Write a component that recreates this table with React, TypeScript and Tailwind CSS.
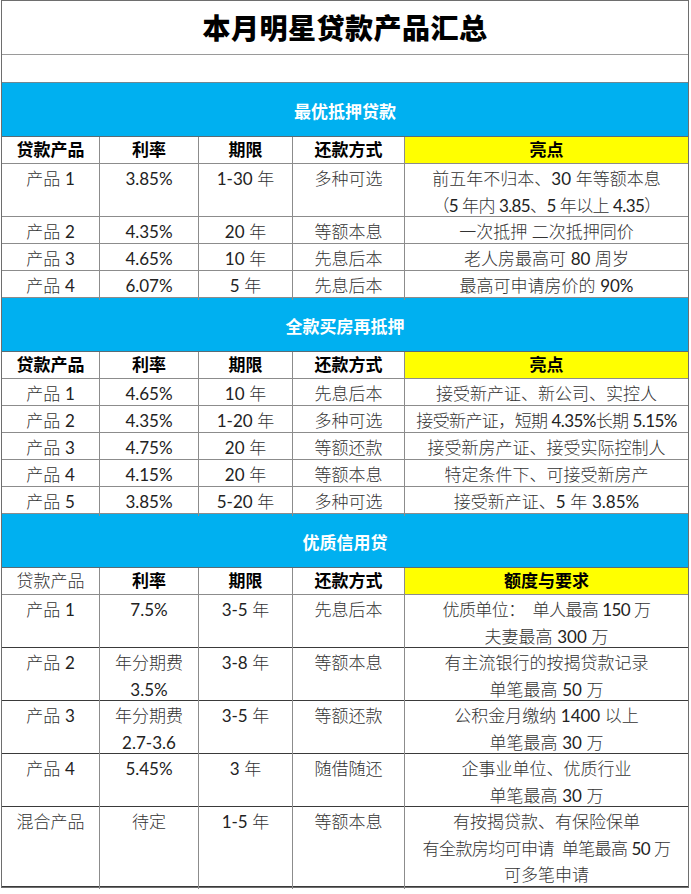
import React from 'react'

type Row = string[][]

interface Section {
  title: string
  lastHeader: string
  plainFirstHeader?: boolean
  rows: Row[]
}

const sections: Section[] = [
  {
    title: '最优抵押贷款',
    lastHeader: '亮点',
    rows: [
      [['产品 1'], ['3.85%'], ['1-30 年'], ['多种可选'], ['前五年不归本、30 年等额本息', '（5 年内 3.85、5 年以上 4.35）']],
      [['产品 2'], ['4.35%'], ['20 年'], ['等额本息'], ['一次抵押 二次抵押同价']],
      [['产品 3'], ['4.65%'], ['10 年'], ['先息后本'], ['老人房最高可 80 周岁']],
      [['产品 4'], ['6.07%'], ['5 年'], ['先息后本'], ['最高可申请房价的 90%']],
    ],
  },
  {
    title: '全款买房再抵押',
    lastHeader: '亮点',
    rows: [
      [['产品 1'], ['4.65%'], ['10 年'], ['先息后本'], ['接受新产证、新公司、实控人']],
      [['产品 2'], ['4.35%'], ['1-20 年'], ['多种可选'], ['接受新产证，短期 4.35%长期 5.15%']],
      [['产品 3'], ['4.75%'], ['20 年'], ['等额还款'], ['接受新房产证、接受实际控制人']],
      [['产品 4'], ['4.15%'], ['20 年'], ['等额本息'], ['特定条件下、可接受新房产']],
      [['产品 5'], ['3.85%'], ['5-20 年'], ['多种可选'], ['接受新产证、5 年 3.85%']],
    ],
  },
  {
    title: '优质信用贷',
    lastHeader: '额度与要求',
    plainFirstHeader: true,
    rows: [
      [['产品 1'], ['7.5%'], ['3-5 年'], ['先息后本'], ['优质单位：  单人最高 150 万', '夫妻最高 300 万']],
      [['产品 2'], ['年分期费', '3.5%'], ['3-8 年'], ['等额本息'], ['有主流银行的按揭贷款记录', '单笔最高 50 万']],
      [['产品 3'], ['年分期费', '2.7-3.6'], ['3-5 年'], ['等额还款'], ['公积金月缴纳 1400 以上', '单笔最高 30 万']],
      [['产品 4'], ['5.45%'], ['3 年'], ['随借随还'], ['企事业单位、优质行业', '单笔最高 30 万']],
      [['混合产品'], ['待定'], ['1-5 年'], ['等额本息'], ['有按揭贷款、有保险保单', '有全款房均可申请  单笔最高 50 万', '可多笔申请']],
    ],
  },
]

const cols = 'grid grid-cols-[98px_99px_94px_112px_1fr]'
const font = { fontFamily: 'Lato, "Noto Sans CJK SC", sans-serif' }
const rowHeight: Record<number, string> = { 1: 'h-[27px]', 2: 'h-[53px]', 3: 'h-[80px]' }

// 数字部分用常规字重，中文部分用细体
const Line: React.FC<{ text: string }> = ({ text }) => (
  <>
    {text.split(/([0-9.%\-]+)/).map((part, i) =>
      i % 2 === 1 ? (
        <span key={i} className="font-normal text-[#222]">
          {part}
        </span>
      ) : (
        <span key={i}>{part}</span>
      )
    )}
  </>
)

const SectionBlock: React.FC<{ section: Section; dark?: boolean }> = ({ section, dark }) => {
  const headers = ['贷款产品', '利率', '期限', '还款方式']
  return (
    <>
      {/* 蓝色标题栏 */}
      <div className="h-[54px] bg-[#00b0f0] border-b border-[#5a6b74] flex items-center justify-center pt-[5px]">
        <span className="text-white font-bold text-[17px]">{section.title}</span>
      </div>

      {/* 表头 */}
      <div className={`${cols} h-[27px] border-b border-[#8c8c8c] text-[17px] text-black`}>
        {headers.map((h, i) => (
          <div
            key={h}
            className={`border-r border-[#8c8c8c] flex items-center justify-center ${
              i === 0 && section.plainFirstHeader ? 'font-light text-[#333]' : 'font-bold'
            }`}
          >
            {h}
          </div>
        ))}
        <div className="bg-[#ffff00] flex items-center justify-center font-bold">{section.lastHeader}</div>
      </div>

      {/* 数据行 */}
      {section.rows.map((row, r) => {
        const lines = Math.max(...row.map((c) => c.length))
        return (
          <div
            key={r}
            className={`${cols} ${rowHeight[lines]} border-b ${dark ? 'border-[#3a3a3a]' : 'border-[#8c8c8c]'} text-[17px] text-[#333] font-light`}
          >
            {row.map((cell, c) => (
              <div
                key={c}
                className={`flex flex-col items-center pt-[2px] whitespace-pre ${c < 4 ? 'border-r border-[#8c8c8c]' : ''}`}
              >
                {cell.map((line, l) => (
                  <div
                    key={l}
                    className={`h-[26.5px] leading-[26px] ${c === 4 && line.length > 16 ? 'tracking-[-0.6px]' : ''}`}
                  >
                    <Line text={line} />
                  </div>
                ))}
              </div>
            ))}
          </div>
        )
      })}
    </>
  )
}

export default function App() {
  return (
    <div className="w-[691px] h-[894px] bg-white" style={font}>
      <div className="ml-px w-[688px] border border-[#6e6e6e]">
        {/* 总标题 */}
        <div className="h-[54px] border-b border-[#9a9a9a] flex items-center justify-center pt-[1px]">
          <h1 className="text-[28px] font-black text-black tracking-[0.5px]">本月明星贷款产品汇总</h1>
        </div>
        <div className="h-[28px] border-b border-[#6e8893]" />

        {sections.map((s, i) => (
          <SectionBlock key={s.title} section={s} dark={i === 2} />
        ))}
      </div>
    </div>
  )
}
